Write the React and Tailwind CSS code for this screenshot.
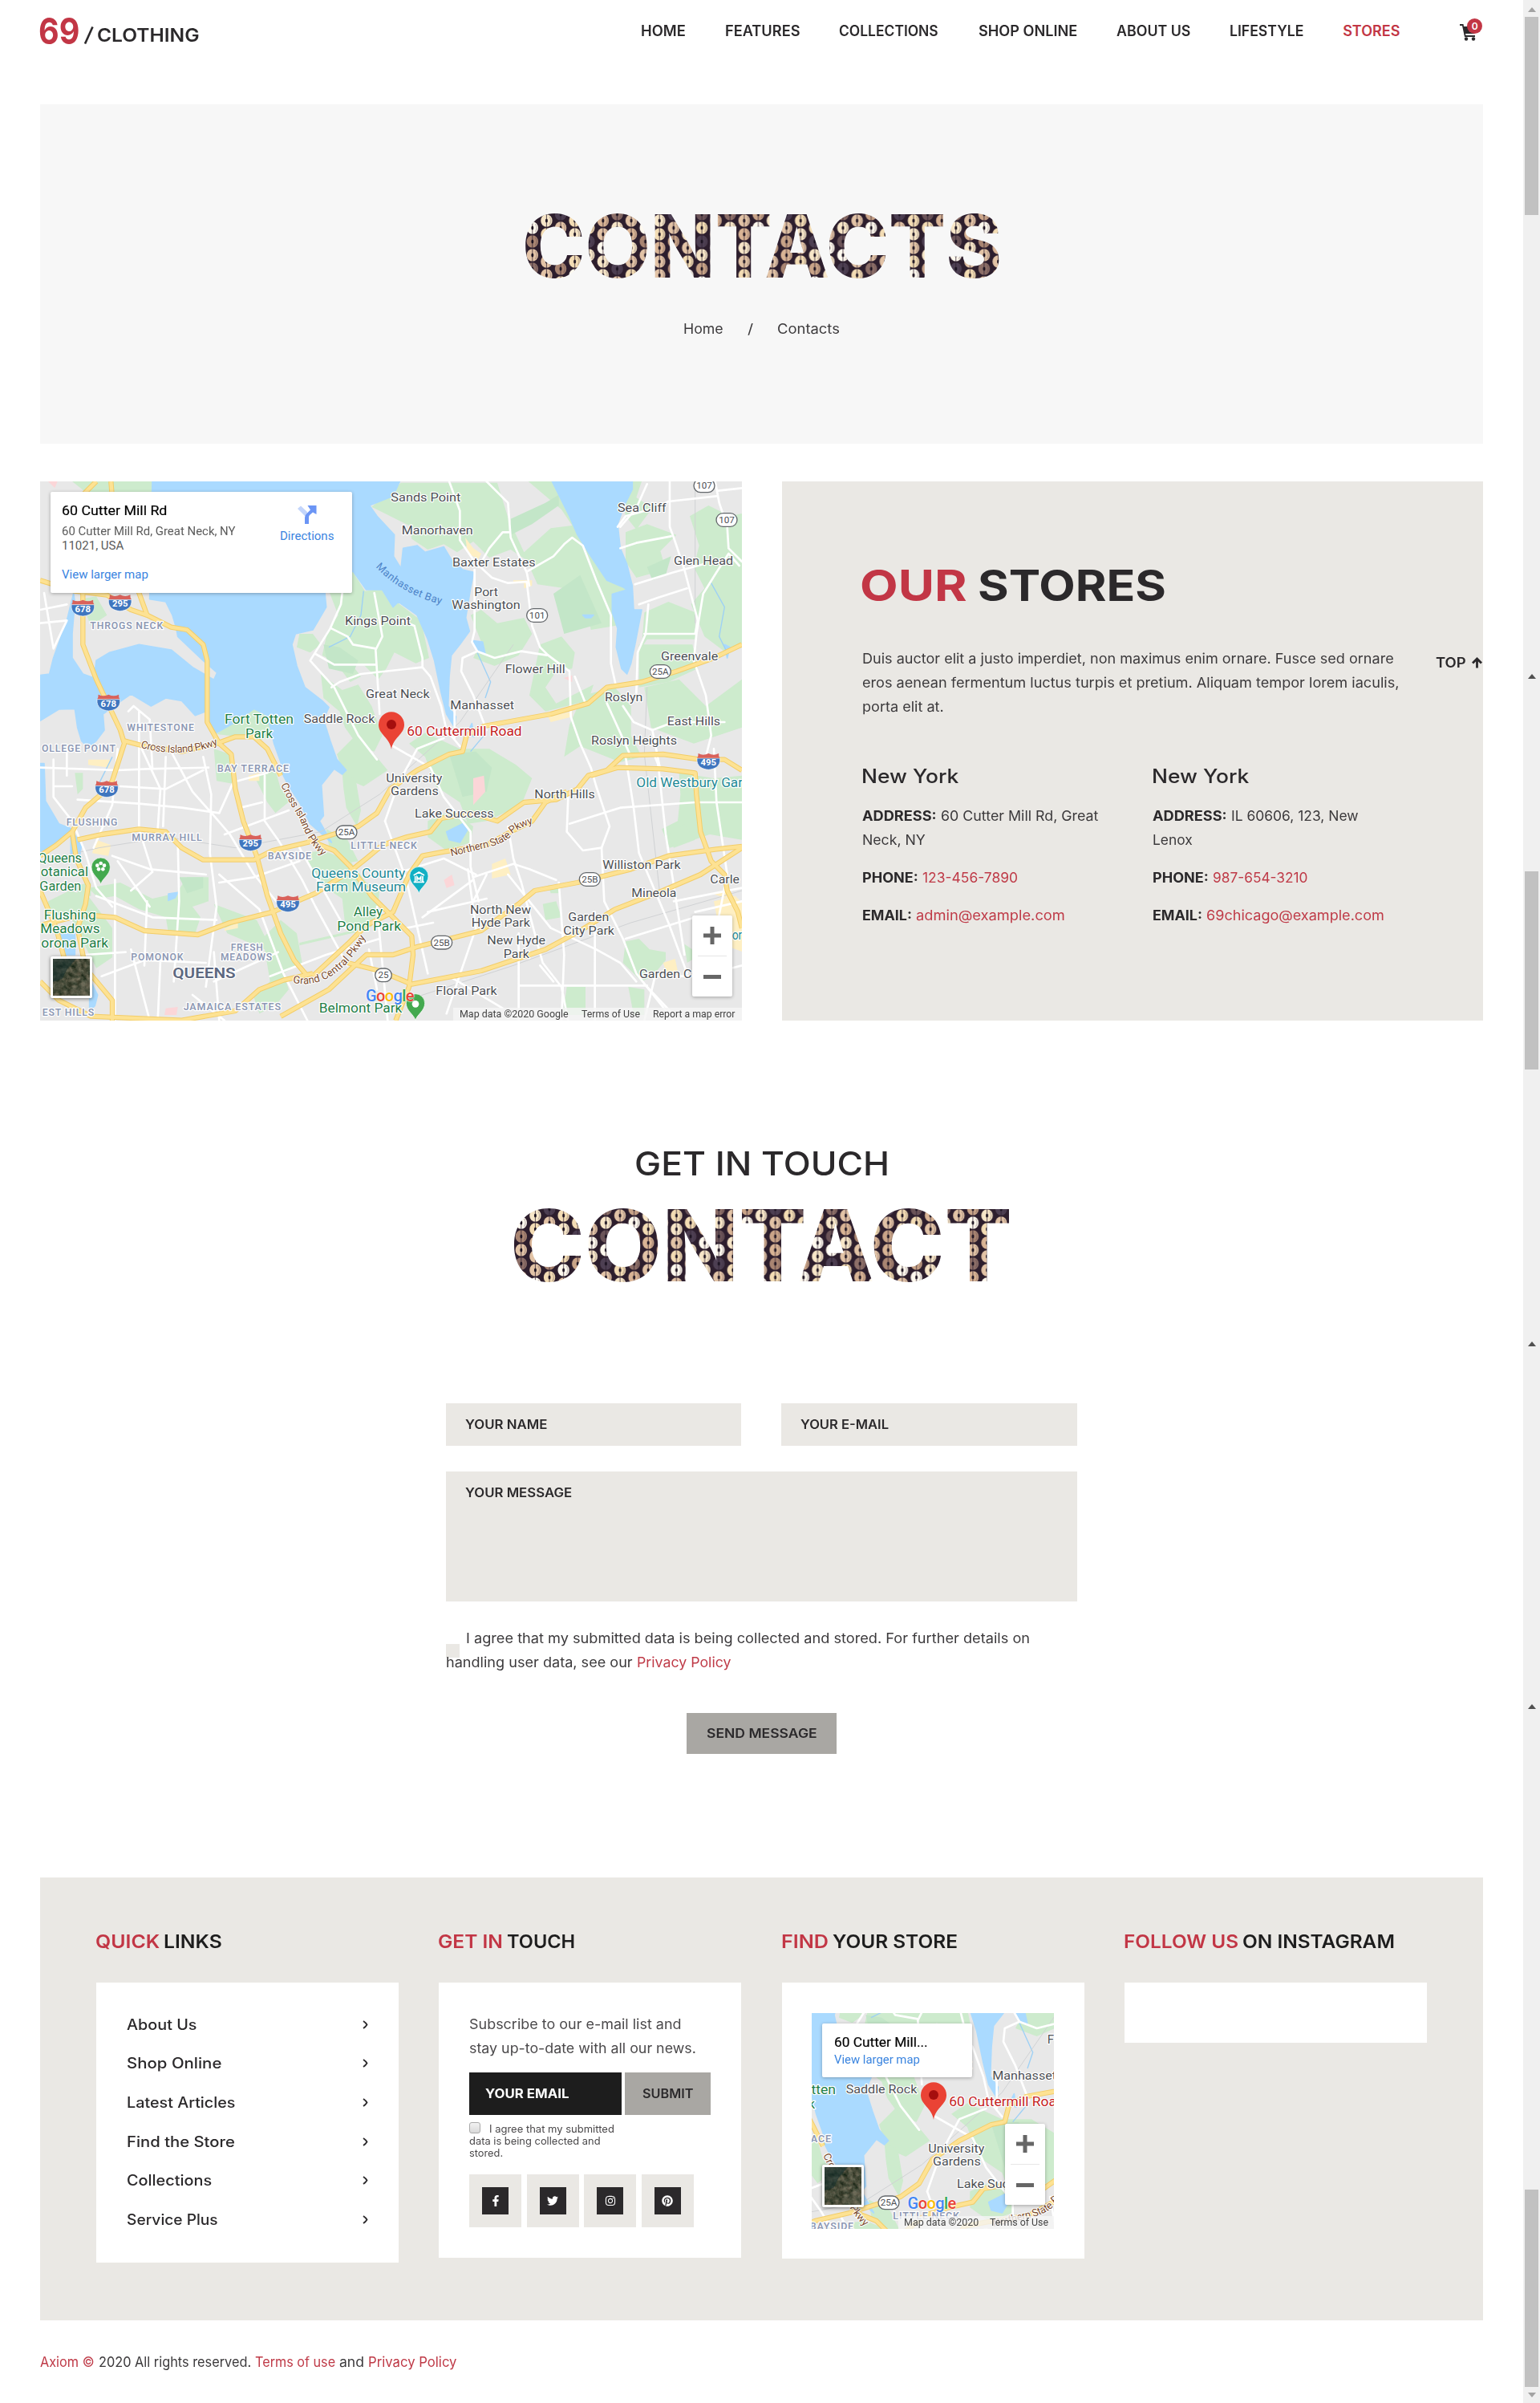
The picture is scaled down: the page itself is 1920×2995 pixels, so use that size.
import React, { useLayoutEffect, useRef, useState } from "react";
import { FaFacebookF, FaTwitter, FaInstagram, FaPinterest } from "react-icons/fa";

function Fit({ w, className = "", children }) {
  const ref = useRef(null);
  const [scale, setScale] = useState(1);
  useLayoutEffect(() => {
    setScale(w / ref.current.offsetWidth);
  }, []);
  return (
    <span className={"inline-block shrink-0 whitespace-pre text-left " + className} style={{ width: w }}>
      <span ref={ref} className="inline-block origin-left" style={{ transform: `scaleX(${scale})` }}>
        {children}
      </span>
    </span>
  );
}

const SEQUINS = ["#c9a488", "#f3dcb4", "#8d6f68", "#fff9ee", "#4d3f52", "#d9b495", "#a98572", "#f7e6c8", "#6b5458", "#e2c3a6"];

function SequinText({ id, width, height, size, x, length, children }) {
  const disks = [];
  for (let c = 0; c < 8; c++) {
    for (let r = 0; r < 7; r++) {
      const cx = c * 17.6 + 8.8;
      const cy = r * 17 + (c % 2 ? 8 : 0);
      disks.push([cx, cy, SEQUINS[(c * 7 + r * 3 + ((c * r) % 4)) % 10]]);
      if (r === 0) disks.push([cx, cy + 119, SEQUINS[(c * 7) % 10]]);
    }
  }
  return (
    <svg width={width} height={height} className="block overflow-visible">
      <defs>
        <pattern id={id} width="140.8" height="119" patternUnits="userSpaceOnUse">
          <rect width="141" height="119" fill="#2d1e2d" />
          {disks.map(([cx, cy, f], i) => (
            <g key={i}>
              <ellipse cx={cx} cy={cy} rx="7.2" ry="7.8" fill={f} />
              <path d={`M${cx + 3.5} ${cy - 5}q3.500 5 0 10`} stroke="#3a2734" strokeOpacity=".3" strokeWidth="1.2" fill="none" />
              <path d={`M${cx} ${cy - 8}v16`} stroke="#2a1b2c" strokeOpacity=".75" strokeWidth="1" />
              <ellipse cx={cx} cy={cy} rx="1.500" ry="2.600" fill="#1b1220" />
            </g>
          ))}
        </pattern>
      </defs>
      <text x={x} y={height - 1} textLength={length} lengthAdjust="spacingAndGlyphs" fontFamily="Inter, sans-serif" fontWeight="800" fontSize={size} fill={`url(#${id})`}>
        {children}
      </text>
    </svg>
  );
}

/* ---------- map ---------- */
const GREENS = [
  "M150 30H450V70L300 200 200 70Z",
  "M540 30h100l-20 60h-70Z M888 30h75l-30 80h-50Z",
  "M1270 125l60 -50 50 -40h360l40 130 60 130 100 -90 80 -10 -40 -60 -130 -110 -60 -50h190l60 120 50 90 60 110 -20 20 80 90 60 150 -120 20 -60 10 -20 -100 -40 -50 -140 -20 -40 -90 -60 -40 -80 30 -60 -60 -60 40 -50 -30 -60 20 -60 -40 -10 -50Z",
  "M1640 530l40 -20 60 50 100 -20 30 60 -50 80 -90 40 -80 -30 30 -60Z",
  "M1900 640l80 -30 50 60 -10 60 -60 10 -40 60 40 60 140 -70 -20 60 -160 40 -60 -60Z",
  "M1095 400l100 -40 50 80 70 -10 60 60 80 60 30 140 -50 20 -80 -40 -30 60 -30 40 -60 -60 -60 20 -90 -50 20 -90 40 -60Z",
  "M1000 600l50 0 30 40 -40 30 -50 -20Z",
  "M1080 750l80 60 60 -20 50 80 40 110 -30 60 -60 -20 -50 -70 -20 -60 -60 -50Z M1160 740l40 -20 30 40 -40 20Z",
  "M2200 30h80l-20 60 60 40 -60 80 -40 -50Z M2220 220l80 -30 110 40 -60 60 20 70 -110 30 -40 -60Z",
  "M2460 160l70 -40 80 40 45 -10v500l-60 20 -80 -60 -50 -120 50 -60 -40 -80 20 -80Z",
  "M2290 520l90 -40 100 40v100h-180l-20 30Z M2270 640h200l20 90 -110 50 -110 20Z",
  "M2060 830l120 -30 60 70 0 110 40 80 -80 20 -150 -60 -60 40 20 -120Z",
  "M2290 800l130 -30 100 100 135 -100v180l-180 60 -160 -60Z",
  "M1410 1010l60 -40 130 60 110 0 100 60 60 50 -40 100 -130 60 -70 10 -30 -80 -90 -60 -40 -110Z",
  "M1480 1300l90 -40 80 60 -10 60 -90 30 -70 -50Z",
  "M2420 1120l130 20 105 -10v240l-120 -20 -150 50 -30 -70 60 -30 10 -100Z",
  "M690 975l70 -60 70 -40 60 30 30 70 -60 20Z M680 1030l60 20 10 110 -60 -10Z",
  "M830 1130l80 -20 20 70 40 40 -60 50 -30 -40Z M1140 1050l60 -60 80 60 50 60 -90 60 -70 -30Z",
  "M1160 1120l50 20 20 120 -15 60 -40 -70 -10 -70Z",
  "M210 1550l120 -20 120 60 90 -20 40 -60h80v90l-60 20 30 40 -20 60h-100l-10 -60 -100 -30 -90 -50 -60 10Z",
  "M60 1600l80 -40 70 20 90 120 0 110 -60 40 -100 -200 -80 0Z M170 1540l50 -10 0 50 -50 0Z",
  "M680 1610l160 60 30 60 60 -60 60 50 20 110 -70 40 20 60 -50 60 -60 30 -20 -60 60 -60 -20 -120 -140 -60Z",
  "M1000 1755l260 -60 0 10 -260 60Z M1010 1420l80 -10 100 40 60 80 50 20 -10 130 -60 40 -60 -40 -10 -90 -60 -40Z",
  "M1100 1330l80 40 40 80 -60 10 -50 -70Z",
  "M2000 1920h70v105h-85Z M2230 1920l60 10 0 95h-40Z M2220 1750l50 -10 40 40 60 10 0 30 -50 60 -40 20 -70 -70Z",
  "M1910 1610l50 -10 20 60 -60 10Z M1930 1540h40v30h-30Z M2380 1350l60 -40 40 60 -80 30Z M2440 1760l60 40 -50 30Z",
  "M180 470l60 -10 40 70 -60 40Z M160 1120h30v60l-20 20Z",
];
const FORESTS = [
  "M1790 170l130 -60 50 -30 0 40 -100 70 -80 40Z M1950 450l100 -70 80 180 -140 40Z M2300 350l90 -40 -20 70 -50 20Z",
  "M1560 1050l100 -10 60 60 -20 90 -90 20Z M1090 640l60 10 70 50 -20 50 -90 -20Z M550 1510h90v40l-60 20Z",
];
const SAND = [
  "M1620 240l30 40 30 20 -10 20 -40 -20Z M1800 400l70 0 0 20 -30 10 0 -20 -40 0Z M1930 910l90 -20 0 20 -80 20Z",
  "M210 1070l80 0 0 30 -80 -10Z M240 1370l55 20 -10 40 -60 -10Z M1720 1460l50 -20 20 60 -70 15Z M720 1700l50 -20 0 20 -50 10Z",
  "M2550 1600l80 -20 30 30v180l-80 -30Z M2360 1830l45 -15 15 70 -40 0Z M810 1130l40 -10 0 30 -40 0Z M2540 1570l60 -10 0 30Z",
];
const WATER = [
  "M450 30H1375L1350 85 1262 120 1290 160 1355 230 1352 310 1380 355 1388 280 1440 270 1470 295 1540 275 1570 325 1610 360 1652 370 1640 430 1622 540 1636 590 1600 640 1568 680 1560 760 1556 870 1585 910 1580 950 1550 900 1530 820 1505 700 1480 620 1440 530 1370 480 1350 500 1310 435 1250 435 1200 365 1095 447 1100 500 1050 585 985 600 972 640 990 720 1020 800 1085 850 1110 875 1090 920 1115 1000 1140 1070 1175 1110 1160 1125 1130 1105 1082 1165 1090 1280 1075 1300 1120 1380 1040 1310 1000 1230 960 1170 935 1120 930 1080 905 1010 880 905 830 880 760 930 690 970 660 950 650 890 610 905 560 850 500 840 445 870 370 825 320 860 265 900 270 960 240 1000 210 1025 185 1000 170 950 160 880 100 882 30 925V755L65 750 80 690 130 550 155 450 160 480 150 600 150 690 190 750 232 765 240 700 290 670 400 640 520 660 600 725 680 772 692 745 640 700 545 610 540 580 525 530 500 480 440 470Z",
  "M1945 30L1970 80 2010 160 2040 230 2090 310 2150 400 2210 425 2225 435 2170 452 2170 520 2190 580 2185 650 2205 730 2225 750 2240 710 2255 640 2280 510 2250 510 2245 420 2225 340 2200 280 2190 190 2215 120 2245 60 2245 30Z",
  "M30 1085h15l5 140 50 85 50 20 -20 30 -70 55 -30 5Z M1645 625l40 5 10 45 -30 -10Z",
  "M100 1710l60 -20 0 110 -40 0Z M215 1890l30 60 -10 40 -20 20Z M1550 1340l60 -30 20 20 -30 50 -40 -10Z M510 1572l35 -5 -10 20 -25 10Z",
  "M2060 530h40l-10 10h-20Z M2590 640l20 10 -10 40Z M1625 975l20 -40 8 50Z M145 1330l40 60 -10 60 -30 -20Z",
];
const MINOR = [
  "M1560 30L1600 140 1600 250 1655 330 1720 390 1780 410 1850 405 1870 570 1900 650 1930 680",
  "M1700 30L1780 110 1790 240 1850 370 1860 420",
  "M1670 350L1710 280 1760 220H1785 M1655 360L1655 590 1645 630 1665 665 1730 690 1830 665 1925 680",
  "M1665 665L1610 690 1605 740 1650 830 1700 960",
  "M1855 365L1950 310 1990 265 2020 240 2060 270 2110 400 2165 530 2165 710 2185 800",
  "M2190 200L2220 160 2330 130 2380 105 2560 85",
  "M2300 40L2260 130 2200 200 M2385 30V200L2400 240 2440 360 2490 550 2480 600 2290 600",
  "M2200 280L2260 260 2390 235 M2255 415L2400 370 2510 340 M2270 490L2340 465 2450 430",
  "M2305 490L2295 600 2265 670 2260 820 M2645 345L2605 300 2560 370 2510 450 2485 600 2475 700 2520 830 2540 980 2520 1060",
  "M2555 30L2570 110 2600 200 2605 280 2655 330 M2565 65L2655 55",
  "M1930 680L2010 740 2015 910 2050 1010 2090 1100 2110 1170 2160 1320 2130 1400 2060 1410 2000 1340 2005 1210",
  "M2030 760L2070 860 M2150 860L2200 970 2240 1060 M2210 870L2250 930 2320 960 2400 930 2590 930 M2320 960L2350 1110",
  "M1160 447L1155 490 1115 580 1040 700 1130 800 1220 980 1290 1070 M1120 580L1180 610 1200 640 1285 655",
  "M1280 447L1310 610 1285 660 1300 900 M1060 675L1130 715 1285 715 M1120 800L1150 780 1230 750 1460 725 1490 760 1530 870 1550 960 1600 1020",
  "M1380 550L1430 570 1460 690 1460 725 M1580 880V990 M1320 1300L1370 1160 1440 1030 1540 990 M1350 1020L1490 1100 1540 1210 1640 1340 1640 1470 1670 1600",
  "M30 560L130 550 M30 510L130 490 M45 447L80 655 130 550",
  "M30 1100L320 1110 430 1105 660 1100 M80 1070V1210L150 1300 200 1420 240 1550 300 1620 M80 1170H150 M130 1030V1130",
  "M320 1030L300 1240 230 1400 M360 890L380 870 440 920 450 1100 M400 890L400 1330 450 1490 M410 1030L480 1180 470 1330",
  "M500 1060L490 1320 M520 1040L600 1190 680 1280 740 1350 830 1500 930 1620 M640 1060L670 1200 665 1420 690 1620 650 1920",
  "M170 1220L400 1235 560 1250 700 1270 750 1160 M330 1170L500 1180 640 1110 M720 1350L960 1260",
  "M450 1490L370 1560 M300 1430L440 1480 650 1500 M545 1380L550 1600 530 1900 M430 1600L420 1840 M440 1620L320 1450",
  "M240 1580L450 1660 690 1670 M700 1500L850 1630 940 1870 1030 2046 M700 1530L830 1510 1000 1450",
  "M870 1130L870 1300 920 1370 1010 1520 1060 1620 1180 1840 M770 1150L880 1120 M780 1250L860 1230 M1000 1400L1170 1700",
  "M310 1520V2046 M200 1800L350 1790 M260 1880L420 1820 650 1830 M480 1820L470 2046 M680 1790L700 2046 M600 1950L720 2046",
  "M370 1780L440 2046 M890 1880L1100 1800 1300 1740 M680 1900L920 1790 M1290 1620L1330 2046 M1260 1780L1290 1930",
  "M1630 1480L1660 1700 1550 2020 M1320 1300L1400 1520 1480 1870 M1650 1520L1460 1660 M1700 1500L1650 1600 M1780 1500L1940 1700 2110 1780",
  "M1780 1320L1800 1440 1830 1530 1880 1720 1910 1830 1980 1920 2005 2046 M1970 1530L1990 1800 1980 2046",
  "M2130 1400L2140 1600 2210 1740 2260 1870 2400 2046 M2105 1640V2046 M2110 1780L2200 1830 2260 1900 M2220 1740L2480 1660",
  "M2220 1060L2250 1250 2270 1420 2380 1680 2450 1870 M2340 1070L2370 1350 2400 1540 2440 1800 M2010 1310L2200 1250 2480 1230 2655 1230",
  "M1820 1915H2300 M1820 1720L1820 2046 M1560 1880L1760 2000 M1950 1900L1900 1840 M2400 1600L2655 1550 M2300 1920L2420 2046",
  "M2550 1030L2560 1230 2600 1500 2560 1700 M2480 1640L2655 1600 M2330 1060L2350 1110 M2290 2046L2330 1880 2500 1880 2655 1840",
  "M1350 1500L1540 1440 1660 1500 M1650 1510L1800 1460 1860 1480 1960 1520 M1480 1640L1700 1590 M1400 1700L1500 1680",
];
const HIGHWAYS = [
  "M240 30L190 80 190 640 240 770 330 960 345 1010 300 1150 270 1190 200 1250 150 1340 90 1390 30 1430",
  "M295 30L310 220 400 447 430 530 520 575 580 585 640 640 655 700 655 930 700 1010 745 1050 760 1180 790 1300 840 1430 880 1580 930 1720 980 1820 1030 1880",
  "M30 400L160 440 280 455 370 510 430 530",
  "M345 1000L420 1020 560 1040 690 1010 760 985 830 985 880 1030 930 1130 M1030 1370L1130 1410 1190 1470 1270 1580 1350 1660 1420 1730 1425 1800 1410 1920 1360 2046",
  "M170 1370L260 1350 400 1330 500 1340 560 1400 640 1445 830 1445 900 1410 1030 1380 1220 1320 1290 1270 1340 1180 1440 1110 1560 1050 1610 1040 1625 980 1690 945 1940 900 2080 860 2150 800 2280 780 2410 740 2550 690 2655 640",
  "M150 1340L165 1440 210 1540 200 1610 170 1700 200 1850 300 1970 300 2046 M30 1560L90 1700 130 1850",
  "M30 1690L190 1650 310 1660 420 1710 620 1725 740 1680 900 1640 990 1600 1060 1570 1200 1480 1250 1440 1310 1390 1400 1360 1490 1340 1530 1290 1640 1270 1740 1300 1840 1230 1960 1220 2040 1180 2080 1130 2150 1110 2210 1055 2360 1050 2500 1070 2590 1070 2655 1110",
  "M30 1900L100 1970 220 2030 560 2045 760 2010 850 1930 940 1895 1050 1870",
  "M1050 1880L1180 1760 1250 1690 1350 1640 1410 1500 1460 1430 1540 1415 M1540 1415L1700 1390 1790 1340 1870 1300 1920 1230 2000 1190",
  "M930 2030L1110 1930 1250 1800 1350 1800 1440 1770 1680 1710 1820 1610 1880 1560 2040 1530 2240 1480 2380 1430 2560 1405 2655 1395",
  "M1180 1830L1300 1860 1420 1910 1680 1860 1920 1780 2050 1710 2180 1630 2360 1560 2500 1500 2655 1400",
  "M2090 1130L2190 1100 2360 1105 2480 1120 2485 1200 2500 1340 2540 1450 2590 1500 2600 1560 2640 1640 2655 1700",
];
const G = "#4d5055", N = "#8e99b4", P = "#1f8048", T = "#1f8a96", B = "#7a4a2c";
const LABELS = [
  ["Sands Point", 1342, 1603, 105, 46, G], ["Manorhaven", 1382, 1649, 229, 46, G], ["Baxter Estates", 1572, 1883, 349, 46, G],
  ["Port", 1654, 1743, 458, 46, G], ["Washington", 1570, 1826, 507, 46, G], ["Sea Cliff", 2190, 2372, 144, 46, G], ["Glen Head", 2400, 2622, 342, 46, G],
  ["Kings Point", 1170, 1416, 567, 46, G], ["Flower Hill", 1769, 1994, 746, 46, G], ["Great Neck", 1248, 1487, 840, 46, G],
  ["Greenvale", 2352, 2566, 699, 46, G], ["Manhasset", 1564, 1803, 881, 46, G], ["Roslyn", 2142, 2284, 853, 46, G],
  ["East Hills", 2375, 2574, 942, 46, G], ["Roslyn Heights", 2091, 2412, 1013, 46, G], ["Saddle Rock", 1016, 1282, 934, 46, G],
  ["THROGS NECK", 217, 492, 583, 36, N, 600], ["WHITESTONE", 355, 608, 962, 36, N, 600], ["OLLEGE POINT", 36, 315, 1042, 36, N, 600],
  ["BAY TERRACE", 692, 963, 1115, 36, N, 600], ["FLUSHING", 128, 322, 1317, 36, N, 600], ["MURRAY HILL", 373, 638, 1373, 36, N, 600],
  ["BAYSIDE", 881, 1047, 1444, 36, N, 600], ["LITTLE NECK", 1192, 1442, 1404, 36, N, 600], ["POMONOK", 370, 568, 1822, 36, N, 600],
  ["FRESH", 743, 866, 1786, 36, N, 600], ["MEADOWS", 705, 900, 1822, 36, N, 600], ["JAMAICA ESTATES", 566, 933, 2006, 36, N, 600],
  ["EST HILLS", 38, 234, 2027, 36, N, 600], ["QUEENS", 526, 761, 1888, 54, "#5d6880", 600],
  ["Fort Totten", 720, 978, 937, 48, P], ["Park", 798, 900, 989, 48, P],
  ["Queens", 22, 186, 1454, 48, P], ["otanical", 32, 210, 1506, 48, P], ["Garden", 28, 184, 1559, 48, P],
  ["Flushing", 44, 239, 1669, 48, P], ["Meadows", 31, 254, 1720, 48, P], ["orona Park", 34, 285, 1773, 48, P],
  ["Alley", 1202, 1311, 1656, 48, P], ["Pond Park", 1141, 1380, 1709, 48, P], ["Belmont Park", 1073, 1384, 2016, 48, P],
  ["Queens County", 1045, 1396, 1512, 48, T], ["Farm Museum", 1062, 1398, 1564, 48, T], ["Old Westbury Gar", 2260, 2658, 1172, 48, T],
  ["University", 1324, 1534, 1154, 46, G], ["Gardens", 1341, 1520, 1202, 46, G], ["Lake Success", 1431, 1727, 1287, 46, G],
  ["North Hills", 1879, 2105, 1216, 46, G], ["Williston Park", 2134, 2426, 1478, 46, G], ["Mineola", 2242, 2410, 1583, 46, G],
  ["Carle", 2536, 2646, 1534, 46, G], ["North New", 1638, 1866, 1646, 46, G], ["Hyde Park", 1643, 1863, 1696, 46, G],
  ["New Hyde", 1702, 1920, 1762, 46, G], ["Park", 1763, 1860, 1811, 46, G], ["Garden", 2005, 2158, 1675, 46, G],
  ["City Park", 1987, 2178, 1726, 46, G], ["Floral Park", 1510, 1739, 1950, 46, G], ["Garden C", 2271, 2467, 1886, 46, G], ["or", 2618, 2656, 1742, 48, T],
  ["F", 1769, 1794, 746, 46, G],
];
const SHIELDS = [[190, 503, "678"], [329, 484, "295"], [286, 857, "678"], [279, 1180, "678"], [817, 1381, "295"], [957, 1609, "495"], [2530, 1077, "495"]];
const ROUTES = [[1889, 531, "101"], [2514, 46, "107"], [2598, 174, "107"], [2350, 741, "25A"], [1176, 1342, "25A"], [2086, 1518, "25B"], [1532, 1754, "25B"], [1314, 1876, "25"]];
const CURVED = [
  ["a", "M405 1025Q560 1070 705 1010", 296, "Cross Island Pkwy", B, [405, 705, 1025]],
  ["b", "M930 1165Q960 1230 1000 1290Q1030 1380 1085 1430", 310, "Cross Island Pkwy", B, [930, 1085, 1300]],
  ["c", "M975 1905Q1130 1935 1245 1740", 345, "Grand Central Pkwy", B, [975, 1245, 1900]],
  ["d", "M1568 1432L1700 1400Q1780 1380 1800 1345Q1830 1320 1876 1310", 335, "Northern State Pkwy", B, [1568, 1876, 1380]],
  ["e", "M1285 350Q1380 450 1530 490", 285, "Manhasset Bay", "#4d83c8", [1285, 1530, 420]],
];

function MapPin({ x, y, fill, children }) {
  return (
    <g transform={`translate(${x} ${y})`}>
      <path d="M0 0C-4 -22 -35 -35 -35 -65A35 35 0 0 1 35 -65C35 -35 4 -22 0 0Z" fill={fill} stroke="#fff" strokeWidth="2" />
      {children}
    </g>
  );
}

function MapDrawing({ id, box, width, height }) {
  const [bx, by, bw, bh] = box;
  const inView = (x1, x2, y) => x2 > bx && x1 < bx + bw && y > by && y - 30 < by + bh;
  return (
    <svg width={width} height={height} viewBox={box.join(" ")} className="block" fontFamily="Roboto, sans-serif">
      <rect width="2700" height="2100" fill="#e8e8e8" />
      <g fill="#cdebcd">{GREENS.map((d, i) => <path key={i} d={d} />)}</g>
      <g fill="#c3e6c8">{FORESTS.map((d, i) => <path key={i} d={d} />)}</g>
      <g fill="#feefc3">{SAND.map((d, i) => <path key={i} d={d} />)}</g>
      <path d="M1650 1140l40 -10 5 60 -45 50Z M1540 1520l30 -20 10 40 -30 10Z M500 2000l45 -5 -5 30 -45 0Z M60 30h35l-10 25Z M1988 765l32 -10 0 25Z" fill="#fbd6d8" />
      <g fill="#aadaff" stroke="#aadaff" strokeWidth="5" strokeLinejoin="round">{WATER.map((d, i) => <path key={i} d={d} />)}</g>
      <path d="M1240 440l-10 90 -40 80 -80 40 M1665 670l50 110 -20 60 M2540 410l50 90 -20 110 30 60 M300 1060l-60 120 M1640 1040l50 -60" fill="none" stroke="#9dd0f5" strokeWidth="4" />
      <path d="M30 1450L250 1400 500 1360 760 1400 1080 1340 1300 1200 1600 930 1800 640 M1400 1970L1800 1840 2240 1680 2655 1560 M2480 60L2480 560 M2300 800l-10 250 60 540" fill="none" stroke="#d0d2d4" strokeWidth="3" />
      <g fill="none" stroke="#fff" strokeWidth="8" strokeLinejoin="round" strokeLinecap="round">{MINOR.map((d, i) => <path key={i} d={d} />)}</g>
      <g fill="none" stroke="#f3cd68" strokeWidth="19" strokeLinejoin="round">{HIGHWAYS.map((d, i) => <path key={i} d={d} />)}</g>
      <g fill="none" stroke="#fde293" strokeWidth="13" strokeLinejoin="round">{HIGHWAYS.map((d, i) => <path key={i} d={d} />)}</g>
      {SHIELDS.filter(([x, y]) => inView(x - 40, x + 40, y)).map(([x, y, n]) => (
        <g key={x} transform={`translate(${x} ${y})`}>
          <path d="M-43 -12H43C46 20 22 29 0 31C-22 29 -46 20 -43 -12Z" fill="#3f76bf" stroke="#fff" strokeWidth="2" />
          <path d="M-43 -13C-36 -20 -40 -27 -38 -30Q-20 -20 0 -30Q20 -20 38 -30C40 -27 36 -20 43 -13Z" fill="#d9625b" />
          <text y="15" textAnchor="middle" fontSize="34" fontWeight="700" fill="#fff">{n}</text>
        </g>
      ))}
      {ROUTES.filter(([x, y]) => inView(x - 40, x + 40, y)).map(([x, y, n]) => (
        <g key={x + y}>
          <rect x={x - (n.length === 2 ? 31 : 39)} y={y - 25} width={n.length === 2 ? 62 : 78} height="50" rx="25" fill="#fff" stroke="#63676b" strokeWidth="4" />
          <text x={x} y={y + 12} textAnchor="middle" fontSize="35" fill="#4d5055">{n}</text>
        </g>
      ))}
      <g stroke="#fff" strokeWidth="7" strokeLinejoin="round" paintOrder="stroke">
        {CURVED.filter((c) => inView(...c[5])).map(([k, d, len, t, f]) => (
          <g key={k}>
            <path id={id + k} d={d} fill="none" stroke="none" />
            <text fontSize="39" fill={f} strokeWidth={k === "e" ? 0 : 6}>
              <textPath href={`#${id + k}`} textLength={len}>{t}</textPath>
            </text>
          </g>
        ))}
        {LABELS.filter(([t, x1, x2, y]) => inView(x1, x2, y) && (t === "F" ? bw < 1000 : !(t === "Flower Hill" && bw < 1000))).map(([t, x1, x2, y, s, f, w], i) => (
          <text key={i} x={x1} y={y} textLength={x2 - x1} lengthAdjust="spacingAndGlyphs" letterSpacing={f === N ? 2.5 : 0} fontSize={s} fill={f} fontWeight={w || 400}>{t}</text>
        ))}
        <text x="1402" y="980" textLength="430" lengthAdjust="spacingAndGlyphs" fontSize="50" fill="#c5221f">60 Cuttermill Road</text>
      </g>
      <MapPin x={257} y={1537} fill="#44a94f">
        <g fill="#fff"><circle cy="-79" r="7" /><circle cx="-13" cy="-71" r="7" /><circle cx="13" cy="-71" r="7" /><circle cx="-8" cy="-57" r="7" /><circle cx="8" cy="-57" r="7" /></g>
      </MapPin>
      <MapPin x={1447} y={1571} fill="#12b0c4">
        <path d="M-20 -68L0 -80 20 -68M-14 -65V-45M14 -65V-45M-20 -43H20M-7 -47V-62L0 -53 7 -62V-47" fill="none" stroke="#fff" strokeWidth="5" />
      </MapPin>
      <MapPin x={1434} y={2046} fill="#44a94f"><circle cy="-62" r="13" fill="#fff" /></MapPin>
      <g transform="translate(1344 1032)">
        <path d="M0 0C-6 -44 -48 -55 -48 -92A48 48 0 0 1 48 -92C48 -55 6 -44 0 0Z" fill="#ea4335" />
        <circle cy="-93" r="18" fill="#a50e0e" />
      </g>
    </svg>
  );
}

function GoogleMark({ className = "" }) {
  return (
    <span className={"font-[Roboto] text-[20px] leading-5 font-medium tracking-[-0.6px] [text-shadow:0_0_2px_#fff,0_0_2px_#fff] " + className}>
      <span className="text-[#4285f4]">G</span><span className="text-[#ea4335]">o</span><span className="text-[#fbbc05]">o</span>
      <span className="text-[#4285f4]">g</span><span className="text-[#34a853]">l</span><span className="text-[#ea4335]">e</span>
    </span>
  );
}

function SatelliteThumb({ id, className = "" }) {
  return (
    <div className={"rounded-[2px] border-[3px] border-white bg-[#3b4239] shadow-[0_1px_4px_rgba(0,0,0,.5)] " + className}>
      <svg className="block h-full w-full" preserveAspectRatio="none" viewBox="0 0 48 48">
        <filter id={id} colorInterpolationFilters="sRGB">
          <feTurbulence type="fractalNoise" baseFrequency=".16" numOctaves="4" seed="5" />
          <feColorMatrix values=".5 0 0 0 .03  .4 .05 0 0 .07  .38 .05 0 0 .01  0 0 0 0 1" />
        </filter>
        <rect width="48" height="48" filter={`url(#${id})`} />
        <path d="M0 0H30L18 14 12 26 0 30Z" fill="#17302e" fillOpacity=".6" />
        <path d="M10 48L48 24V48Z" fill="#8b8172" fillOpacity=".2" />
      </svg>
    </div>
  );
}

function ZoomControl({ className = "" }) {
  return (
    <div className={"h-[101px] w-[50px] rounded-[2px] bg-white shadow-[0_1px_4px_rgba(0,0,0,.3)] " + className}>
      <svg width="50" height="101" viewBox="0 0 50 101">
        <path d="M14 25H36M25 14V36M14 76.5H36" stroke="#666" strokeWidth="5" />
        <path d="M7 50.5H43" stroke="#e6e6e6" />
      </svg>
    </div>
  );
}

/* ---------- page ---------- */
const NAV = [["HOME", 56], ["FEATURES", 93], ["COLLECTIONS", 124], ["SHOP ONLINE", 123], ["ABOUT US", 92], ["LIFESTYLE", 92], ["STORES", 71]];
const LINKS = [["About Us", 88], ["Shop Online", 118], ["Latest Articles", 135], ["Find the Store", 135], ["Collections", 106], ["Service Plus", 114]];

function Store({ city, address, rest, restW, phone, phoneW, email, emailW, addressW }) {
  return (
    <div className="w-[362px] text-[17px] leading-[30px] text-[#3b393b]">
      <h3 className="-ml-[1px] text-[24px] leading-[30px] font-medium text-[#2b292b]"><Fit w={121}>{city}</Fit></h3>
      <p className="mt-[19px] flex gap-[5px]"><Fit w={93} className="font-bold text-[#2b292b]">ADDRESS:</Fit><Fit w={addressW}>{address}</Fit></p>
      <p className="flex"><Fit w={restW}>{rest}</Fit></p>
      <p className="mt-[17px] flex gap-[5px]"><Fit w={70} className="font-bold text-[#2b292b]">PHONE:</Fit><Fit w={phoneW} className="text-[#bf3a47]">{phone}</Fit></p>
      <p className="mt-[17px] flex gap-[5px]"><Fit w={62} className="font-bold text-[#2b292b]">EMAIL:</Fit><Fit w={emailW} className="text-[#bf3a47]">{email}</Fit></p>
    </div>
  );
}

function FooterColumn({ lead, leadW, title, titleW, className = "", children }) {
  return (
    <section className="w-[377px] shrink-0">
      <h4 className="-ml-[1px] flex gap-[5px] text-[23px] leading-[30px] font-semibold text-[#1d1d1d]">
        <Fit w={leadW + 1} className="text-[#c23645]">{lead}</Fit>
        <Fit w={titleW + 1}>{title}</Fit>
      </h4>
      <div className={"mt-[36px] bg-white " + className}>{children}</div>
    </section>
  );
}

function Arrow({ down, className = "" }) {
  return (
    <svg width="10" height="6" viewBox="0 0 10 6" className={"absolute left-[6px] " + className}>
      <path d={down ? "M0 0H10L5 6Z" : "M0 6H10L5 0Z"} fill="currentColor" />
    </svg>
  );
}

export default function App() {
  return (
    <div className="flex h-[2995px] w-[1920px] overflow-hidden bg-white font-[Inter,sans-serif] text-[#2b292b]">
      <div className="w-[1899px] shrink-0 px-[50px]">
        <header className="flex h-[130px] w-[1799px] items-start">
          <div className="flex h-[77px] items-center">
            <Fit w={51} className="-ml-[2px] text-[45px] leading-[50px] font-bold text-[#c23645]">69</Fit>
            <svg width="14" height="22" viewBox="0 0 14 22" className="mt-[10px] ml-[5px]"><path d="M2 21.500L11.500 .5" stroke="#2b292b" strokeWidth="2.600" /></svg>
            <Fit w={128} className="mt-[11px] ml-[3px] text-[23px] leading-[30px] font-semibold">CLOTHING</Fit>
          </div>
          <nav className="ml-[550px] flex h-[77px] items-center gap-[49.200px] text-[18px] font-semibold">
            {NAV.map(([t, w]) => <Fit key={t} w={w} className={t === "STORES" ? "text-[#c23645]" : ""}>{t}</Fit>)}
          </nav>
          <div className="relative mt-[28px] ml-[75px] h-[24px] w-[28px]">
            <svg width="23" height="23" viewBox="0 0 23 23" className="block">
              <path d="M0 2H4.500L5 5H20L18 14H7L7.500 16H19V18H6L3 4H0Z" fill="#2b292b" />
              <circle cx="8" cy="20.500" r="2.200" fill="#2b292b" /><circle cx="17" cy="20.500" r="2.200" fill="#2b292b" />
            </svg>
            <span className="absolute -top-[5px] left-[9px] flex h-[19px] w-[19px] items-center justify-center rounded-full bg-[#c23645] text-[12px] font-semibold text-white">0</span>
          </div>
        </header>

        <section className="flex h-[423px] flex-col items-center bg-[#f7f7f7] pt-[137px]">
          <h1>
            <SequinText id="sequin-a" width={590} height={80} size={109} x={-4} length={598}>CONTACTS</SequinText>
          </h1>
          <div className="mt-[48px] flex gap-[30px] text-[17px] leading-[30px] text-[#3b393b]">
            <Fit w={50}>Home</Fit><Fit w={7}>/</Fit><Fit w={78}>Contacts</Fit>
          </div>
        </section>

        <section className="relative mt-[47px] flex h-[672px] gap-[50px]">
          <div className="relative h-[672px] w-[875px] shrink-0 overflow-hidden">
            <MapDrawing id="large-map-" box={[30, 30, 2625, 2016]} width={875} height={672} />
            <div className="absolute top-[13px] left-[13px] flex h-[126px] w-[376px] justify-between rounded-[2px] bg-white pt-[12px] pr-[23px] pl-[14px] font-[Roboto] text-[15px] shadow-[0_1px_4px_rgba(0,0,0,.3)]">
              <div>
                <div className="text-[17px] leading-[22px] text-black [-webkit-text-stroke:.2px_#000]"><Fit w={131}>60 Cutter Mill Rd</Fit></div>
                <div className="mt-[6px] leading-[18px] text-[#5b5b5b]"><Fit w={217}>60 Cutter Mill Rd, Great Neck, NY</Fit></div>
                <div className="leading-[18px] text-[#5b5b5b]"><Fit w={77}>11021, USA</Fit></div>
                <div className="mt-[18px] leading-[18px] text-[#3a84df]"><Fit w={108}>View larger map</Fit></div>
              </div>
              <div className="flex flex-col items-center pt-[5px]">
                <svg width="24" height="23" viewBox="0 0 24 23">
                  <path d="M0 4L4 .5 12 8V12L10 14Z" fill="#c3d5fb" />
                  <path d="M9 23V15Q9 12 12 9.500L16 5.500 12.500 0H23.500V11L19 8.500 15 12Q14 13 14 15V23Z" fill="#6b95f5" />
                </svg>
                <div className="mt-[6px] leading-[18px] text-[#3a84df]"><Fit w={67}>Directions</Fit></div>
              </div>
            </div>
            <SatelliteThumb id="sat-large" className="absolute bottom-[28px] left-[13px] h-[52px] w-[52px]" />
            <GoogleMark className="absolute bottom-[21px] left-[406px]" />
            <ZoomControl className="absolute right-[12px] bottom-[30px]" />
            <div className="absolute right-0 bottom-0 flex h-[16px] items-center gap-[16px] bg-[#f5f5f5]/80 px-[8px] font-[Roboto] text-[13px] text-[#444]">
              <Fit w={136}>Map data ©2020 Google</Fit><Fit w={73}>Terms of Use</Fit><Fit w={103}>Report a map error</Fit>
            </div>
          </div>
          <div className="h-[672px] flex-1 bg-[#eae8e4] pt-[100px] pl-[100px]">
            <h2 className="-ml-[3px] flex gap-[14px] text-[53px] leading-[60px] font-bold">
              <Fit w={133} className="text-[#c23645]">OUR</Fit><Fit w={235}>STORES</Fit>
            </h2>
            <div className="mt-[46px] flex flex-col text-[17px] leading-[30px] text-[#3b393b]">
              <Fit w={663}>Duis auctor elit a justo imperdiet, non maximus enim ornare. Fusce sed ornare</Fit>
              <Fit w={669}>eros aenean fermentum luctus turpis et pretium. Aliquam tempor lorem iaculis,</Fit>
              <Fit w={102}>porta elit at.</Fit>
            </div>
            <div className="mt-[57px] flex">
              <Store city="New York" address="60 Cutter Mill Rd, Great" addressW={196} rest="Neck, NY" restW={79} phone="123-456-7890" phoneW={119} email="admin@example.com" emailW={186} />
              <Store city="New York" address="IL 60606, 123, New" addressW={159} rest="Lenox" restW={50} phone="987-654-3210" phoneW={119} email="69chicago@example.com" emailW={222} />
            </div>
          </div>
          <a className="absolute top-[211px] right-0 flex items-center gap-[6px] text-[17px] leading-[30px] font-semibold">
            <Fit w={38}>TOP</Fit>
            <svg width="15" height="14" viewBox="0 0 15 14"><path d="M7.500 13.500V2M2 7.500L7.500 2 13 7.500" fill="none" stroke="#2b292b" strokeWidth="2.800" /></svg>
          </a>
        </section>

        <section className="mt-[153px] flex flex-col items-center">
          <div className="text-[41px] leading-[50px] font-medium"><Fit w={318}>GET IN TOUCH</Fit></div>
          <h2 className="mt-[32px]">
            <SequinText id="sequin-b" width={618} height={91} size={124} x={-5} length={626}>CONTACT</SequinText>
          </h2>
          <form className="mt-[151px] flex w-[787px] flex-col text-[15.500px] font-semibold">
            <div className="flex gap-[50px]">
              <div className="flex h-[53px] w-[368px] items-center bg-[#eae8e4] pl-[24px]"><Fit w={103}>YOUR NAME</Fit></div>
              <div className="flex h-[53px] w-[369px] items-center bg-[#eae8e4] pl-[24px]"><Fit w={110}>YOUR E-MAIL</Fit></div>
            </div>
            <div className="mt-[32px] flex h-[162px] items-start bg-[#eae8e4] pt-[15px] pl-[24px]"><Fit w={133}>YOUR MESSAGE</Fit></div>
            <div className="relative mt-[31px] text-[17px] leading-[30px] font-normal text-[#3b393b]">
              <div className="absolute top-[22px] left-0 h-[17px] w-[17px] bg-[#eae8e4]" />
              <div className="relative pl-[25px]"><Fit w={703}>I agree that my submitted data is being collected and stored. For further details on</Fit></div>
              <div className="relative flex gap-[5px]"><Fit w={233}>handling user data, see our</Fit><Fit w={118} className="text-[#bf3a47]">Privacy Policy</Fit></div>
            </div>
            <div className="mt-[48px] flex h-[51px] w-[187px] items-center justify-center self-center bg-[#a9a7a3]"><Fit w={138}>SEND MESSAGE</Fit></div>
          </form>
        </section>

        <footer>
          <div className="mt-[154px] flex h-[552px] items-start gap-[50.300px] bg-[#eae8e4] pt-[65px] pl-[70px]">
            <FooterColumn lead="QUICK" leadW={79} title="LINKS" titleW={72} className="h-[349px] px-[38px] pt-[28px]">
              {LINKS.map(([t, w]) => (
                <div key={t} className="flex h-[48.600px] items-center justify-between text-[18px] font-medium">
                  <Fit w={w}>{t}</Fit>
                  <svg width="7" height="11" viewBox="0 0 7 11"><path d="M1 1Q4 3 5.500 5.500Q4 8 1 10" fill="none" stroke="#2b292b" strokeWidth="1.800" /></svg>
                </div>
              ))}
            </FooterColumn>
            <FooterColumn lead="GET IN" leadW={80} title="TOUCH" titleW={84} className="h-[343px] px-[38px] pt-[37px]">
              <div className="flex flex-col text-[17px] leading-[30px] text-[#4a484a]">
                <Fit w={264}>Subscribe to our e-mail list and</Fit>
                <Fit w={283}>stay up-to-date with all our news.</Fit>
              </div>
              <div className="mt-[15px] flex gap-[4px] text-[15.500px] font-bold">
                <div className="flex h-[53px] w-[192px] items-center bg-[#1d1d1d] pl-[20px] text-white"><Fit w={104}>YOUR EMAIL</Fit></div>
                <div className="flex h-[53px] w-[107px] shrink-0 items-center justify-center bg-[#a9a7a3] font-semibold"><Fit w={64}>SUBMIT</Fit></div>
              </div>
              <div className="relative mt-[10px] flex flex-col text-[12.500px] leading-[15px] text-[#4a484a]">
                <div className="absolute -top-[1px] left-0 h-[14px] w-[14px] rounded-[3px] border border-[#a9a9a9] bg-gradient-to-b from-[#f2f2f2] to-[#d9d9d9]" />
                <Fit w={156} className="ml-[25px]">I agree that my submitted</Fit>
                <Fit w={164}>data is being collected and</Fit>
                <Fit w={42}>stored.</Fit>
              </div>
              <div className="mt-[19px] flex gap-[6.500px]">
                {[FaFacebookF, FaTwitter, FaInstagram, FaPinterest].map((Icon, i) => (
                  <div key={i} className="flex h-[66px] w-[65px] shrink-0 items-center justify-center bg-[#eae8e4]">
                    <div className="flex h-[34px] w-[33px] items-center justify-center bg-[#2b292b] text-white"><Icon size={14} /></div>
                  </div>
                ))}
              </div>
            </FooterColumn>
            <FooterColumn lead="FIND" leadW={58} title="YOUR STORE" titleW={155} className="h-[344px] px-[37px] pt-[38px]">
              <div className="relative h-[269px] w-[302px] overflow-hidden">
                <MapDrawing id="small-map-" box={[888, 633, 906, 807]} width={302} height={269} />
                <div className="absolute top-[13px] left-[13px] h-[67px] w-[187px] rounded-[2px] bg-white pt-[11px] pl-[15px] font-[Roboto] shadow-[0_1px_4px_rgba(0,0,0,.3)]">
                  <div className="text-[17px] leading-[24px] text-black [-webkit-text-stroke:.2px_#000]"><Fit w={117}>60 Cutter Mill...</Fit></div>
                  <div className="text-[15px] leading-[20px] text-[#3a84df]"><Fit w={107}>View larger map</Fit></div>
                </div>
                <SatelliteThumb id="sat-small" className="absolute bottom-[27px] left-[13px] h-[53px] w-[52px]" />
                <GoogleMark className="absolute bottom-[22px] left-[120px]" />
                <ZoomControl className="absolute right-[11px] bottom-[30px]" />
                <div className="absolute right-0 bottom-0 flex h-[16px] items-center gap-[14px] bg-[#f5f5f5]/80 px-[7px] font-[Roboto] text-[13px] text-[#444]">
                  <Fit w={93}>Map data ©2020</Fit><Fit w={73}>Terms of Use</Fit>
                </div>
              </div>
            </FooterColumn>
            <FooterColumn lead="FOLLOW US" leadW={142} title="ON INSTAGRAM" titleW={189} className="h-[75px]" />
          </div>
          <p className="mt-[37px] flex gap-[5px] text-[17px] leading-[30px] text-[#3b393b]">
            <Fit w={68} className="text-[#bf3a47]">Axiom ©</Fit><Fit w={190}>2020 All rights reserved.</Fit>
            <Fit w={100} className="text-[#bf3a47]">Terms of use</Fit><Fit w={31}>and</Fit><Fit w={111} className="text-[#bf3a47]">Privacy Policy</Fit>
          </p>
        </footer>
      </div>

      <aside className="relative flex w-[21px] shrink-0 flex-col items-center bg-[#f0f0f0]">
        <div className="mt-[21px] h-[247px] w-[17px] bg-[#c1c1c1]" />
        <div className="mt-[818px] h-[247px] w-[17px] bg-[#c1c1c1]" />
        <div className="mt-[1396px] h-[246px] w-[17px] bg-[#c1c1c1]" />
        <Arrow className="top-[9px] text-[#a3a3a3]" />
        <Arrow className="top-[840px] text-[#505050]" />
        <Arrow className="top-[1672px] text-[#505050]" />
        <Arrow className="top-[2124px] text-[#505050]" />
        <Arrow down className="top-[2982px] text-[#a3a3a3]" />
      </aside>
    </div>
  );
}
